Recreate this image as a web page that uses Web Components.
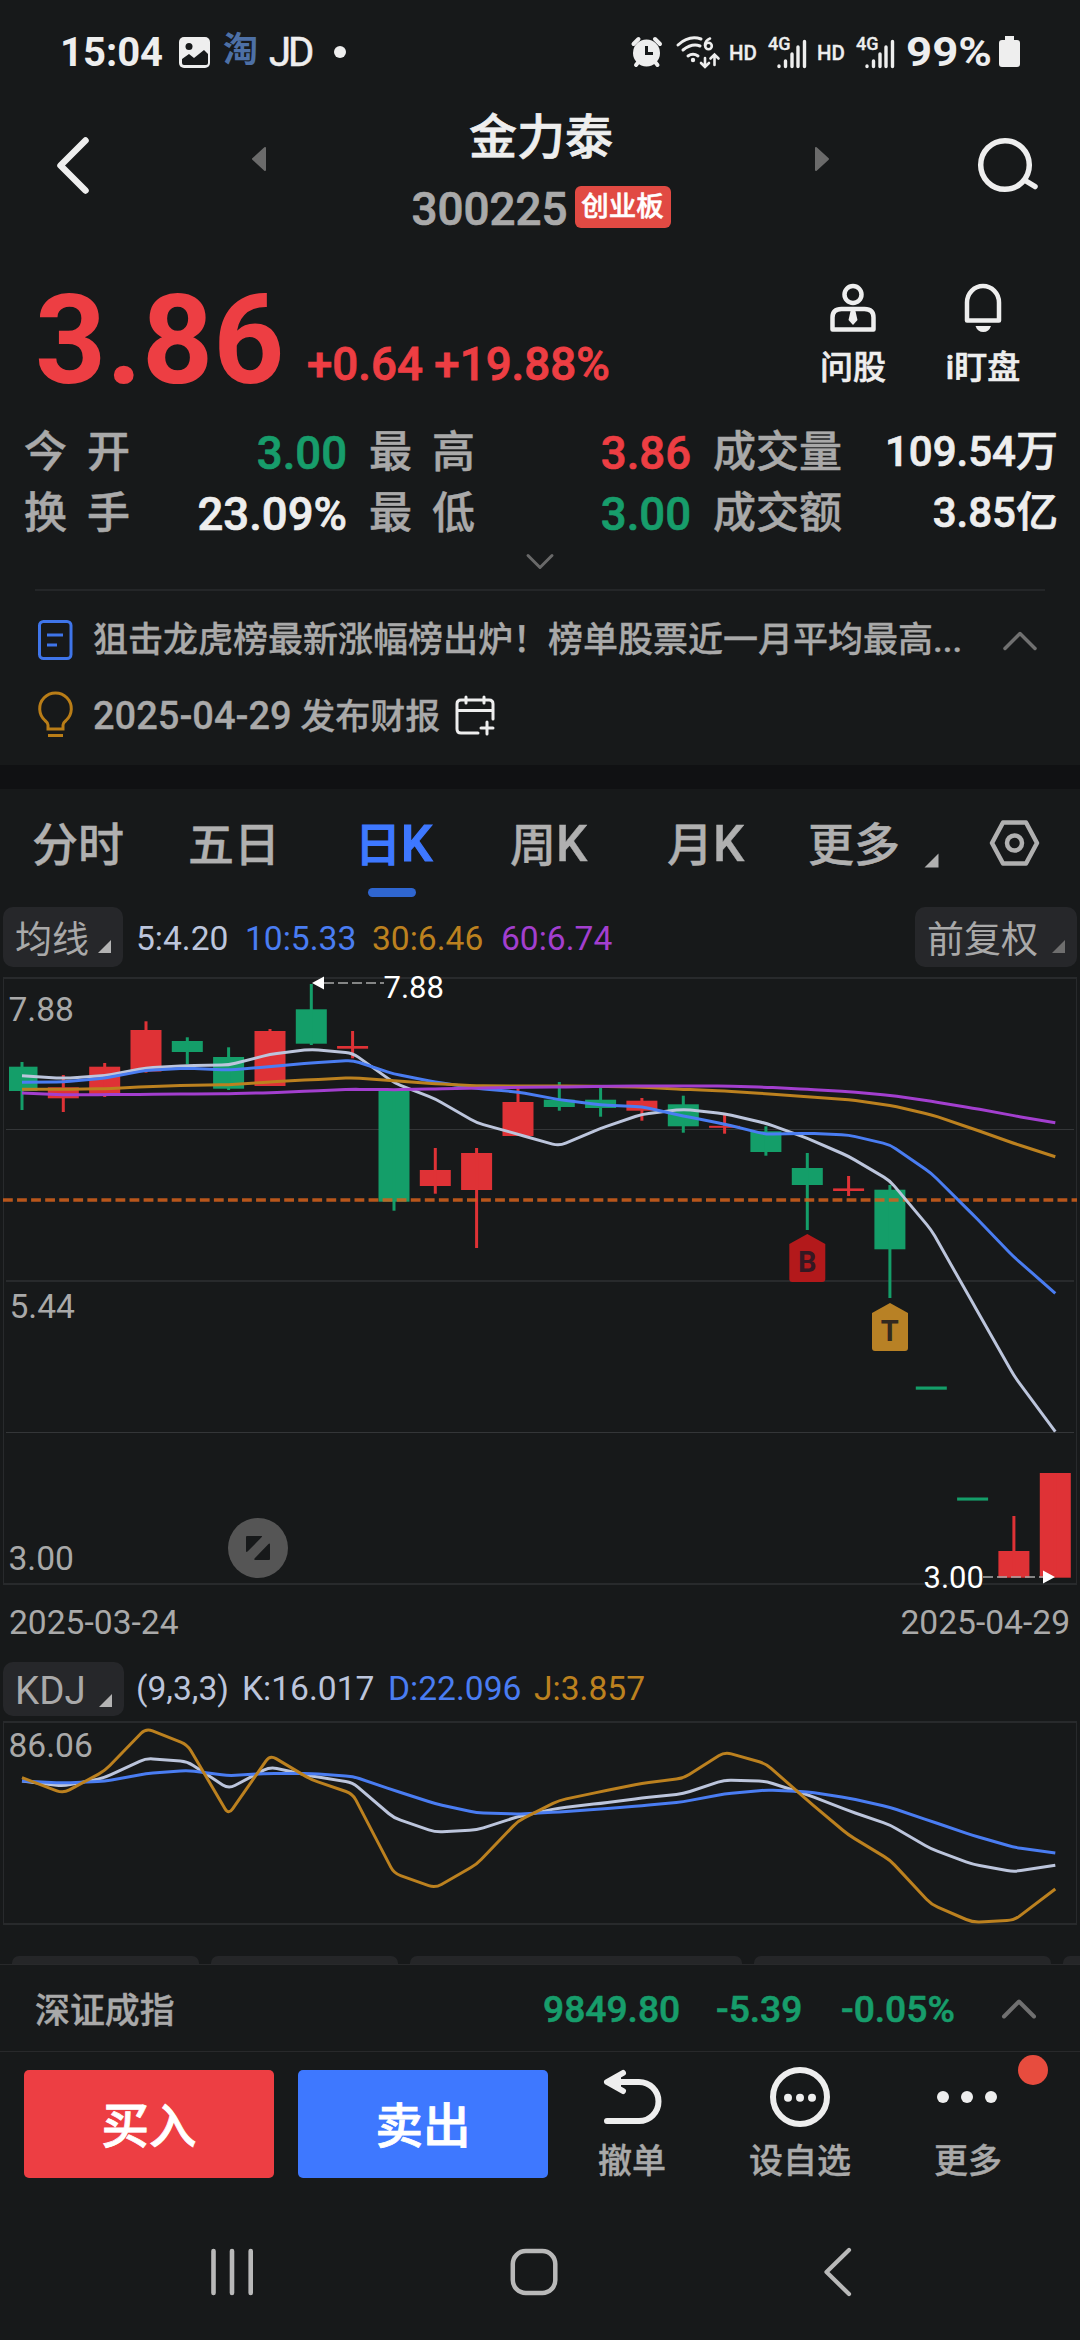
<!DOCTYPE html>
<html lang="zh-CN">
<head>
<meta charset="utf-8">
<title>金力泰 300225</title>
<style>
html,body{margin:0;padding:0;background:#17191a}
body{width:1080px;height:2340px;overflow:hidden;font-family:Roboto,"Noto Sans CJK SC",sans-serif;color:#eee;
--up:#ed3e43;--down:#179d6b;--mut:#a9a9a9;--blue:#3e78ff}
</style>
</head>
<body>
<stock-app></stock-app>
<script>
const define=(name,css,html)=>customElements.define(name,class extends HTMLElement{
  constructor(){super();this.attachShadow({mode:'open'}).innerHTML=
    `<style>*{box-sizing:border-box}svg{display:block;flex:none}:host{display:flex;box-sizing:border-box;white-space:nowrap}${css}</style>`+
    (typeof html==='function'?html(this):html);}
});

define('status-bar',`
:host{height:104px;align-items:center}
.time{width:119px;margin-left:60px;font-size:40px;font-weight:700}
.tao{width:46px;margin-left:12px;font-size:35px;line-height:50px;margin-top:-3px;font-weight:700;color:#4d70a6}
.jd{width:56px;font-size:40px;letter-spacing:-3px;-webkit-text-stroke:.6px #eee}
.sig{display:flex;width:52px;align-items:center;flex:none}
.pct{width:92px;margin-left:1px;font-size:40px;font-weight:700;transform:scaleX(1.14);transform-origin:0 50%}
.hd{width:36px;flex:none;font-size:20.500px;font-weight:500;padding-top:1px;-webkit-text-stroke:.3px}
.g{width:19px;flex:none;font-size:18px;font-weight:500;margin:-18px -14px 0 3px;-webkit-text-stroke:.3px}
`,`
<span class="time">15:04</span>
<svg width="32" height="104" viewBox="180 0 32 104"><rect x="180" y="37" width="31" height="31" rx="5" fill="#eee"/><circle cx="190" cy="46.500" r="3.500" fill="#17191a"/><path d="M183 59l7-5 5 4 10-8 4 4v9q0 2-2 2h-22q-2 0-2-2z" fill="#17191a"/></svg>
<span class="tao">淘</span><span class="jd">JD</span>
<svg width="300" height="104" viewBox="325 0 300 104"><circle cx="340" cy="52" r="6" fill="#eee"/></svg>
<svg width="48" height="104" viewBox="625 0 48 104"><circle cx="646.500" cy="53" r="13.500" fill="#eee"/><path d="M633.500 44l5-5M660 44l-5-5M636 65l4-5M657.500 65l-4-5" stroke="#eee" stroke-width="4" stroke-linecap="round"/><path d="M646.500 46v7.500h6.500" fill="none" stroke="#17191a" stroke-width="3"/></svg>
<svg width="56" height="104" viewBox="673 0 56 104" fill="none" stroke="#eee" stroke-width="3" stroke-linecap="round"><path d="M678 45q11-10 23-6M683 50q9-7 17-4M688 56q5-3.500 10 0"/><circle cx="693" cy="60" r="2.200" fill="#eee" stroke="none"/><path d="M705 58v8M701 63l4 4 4-4M714.500 65v-9M710.500 58.500l4-4 4 4" stroke-width="2.600"/><path d="M710 38.500q-5 2-5 7" stroke-width="2.600"/><circle cx="708.500" cy="46" r="3.300" stroke-width="2.600"/></svg>
<span class="hd">HD</span>
<span class="sig"><span class="g">4G</span><svg width="50" height="104" viewBox="773 0 50 104" stroke="#eee" stroke-width="3.400" stroke-linecap="round"><path d="M779 66v.500M785.500 61v5.500M792 54v12.500M798 47v19.500M804.500 41.500v25"/></svg></span>
<span class="hd">HD</span>
<span class="sig"><span class="g">4G</span><svg width="50" height="104" viewBox="773 0 50 104" stroke="#eee" stroke-width="3.400" stroke-linecap="round"><path d="M779 66v.500M785.500 61v5.500M792 54v12.500M798 47v19.500M804.500 41.500v25"/></svg></span>
<span class="pct">99%</span>
<svg width="24" height="104" viewBox="998 0 24 104"><path d="M1005 36h9v4h3q3 0 3 3v21q0 3-3 3h-15q-3 0-3-3V43q0-3 3-3h3z" fill="#eee"/></svg>
`);

define('stock-header',`
:host{height:156px}
.mid{width:282px;display:flex;flex-direction:column;align-items:center;-webkit-text-stroke:.7px}
.name{font-size:48px;line-height:64px;font-weight:500;padding-top:2px}
.row{display:flex;align-items:center;height:42px;margin-top:16px}
.code{font-size:45.800px;font-weight:500;color:var(--mut);padding-top:5px}
.tag{width:96px;height:42px;line-height:41px;margin-left:7px;border-radius:6px;background:#e14a43;color:#fff;font-size:27.500px;font-weight:500;text-align:center;-webkit-text-stroke:.5px}
`,`
<svg width="160" height="156" viewBox="0 104 160 156"><path d="M85.500 140.500L60.500 165.500 85.500 190.500" fill="none" stroke="#eee" stroke-width="6.500" stroke-linecap="round" stroke-linejoin="round"/></svg>
<svg width="240" height="156" viewBox="160 104 240 156"><path d="M265 148v22l-12-11z" fill="#6b6b6b" stroke="#6b6b6b" stroke-width="2" stroke-linejoin="round"/></svg>
<div class="mid"><div class="name">金力泰</div><div class="row"><span class="code">300225</span><span class="tag">创业板</span></div></div>
<svg width="240" height="156" viewBox="682 104 240 156"><path d="M816 148v22l12-11z" fill="#6b6b6b" stroke="#6b6b6b" stroke-width="2" stroke-linejoin="round"/></svg>
<svg width="158" height="156" viewBox="922 104 158 156" fill="none" stroke="#eee" stroke-width="5.500" stroke-linecap="round"><circle cx="1005" cy="165" r="24.300"/><path d="M1026 181l9 5.500"/></svg>
`);

define('price-panel',`
:host{height:160px}
.last{width:284px;padding-left:35px;font-size:124px;line-height:162px;font-weight:700;color:var(--up)}
.chg{width:491px;padding:60px 0 0 23px;font-size:45.700px;line-height:89px;font-weight:500;color:var(--up);-webkit-text-stroke:.8px}
.act{width:130px;display:flex;flex-direction:column;align-items:center;padding-top:20px;font-size:33px;font-weight:500;-webkit-text-stroke:.6px}
.act span{line-height:40px;margin-top:12px}
svg{-webkit-text-stroke:0}
`,`
<span class="last">3.86</span><span class="chg">+0.64 +19.88%</span>
<div class="act" style="margin-left:13px"><svg width="52" height="56" viewBox="827 280 52 56" fill="none" stroke="#eee" stroke-width="4.500" stroke-linejoin="round"><circle cx="853" cy="294.500" r="8.500"/><path d="M832.500 329.500v-12q0-8.500 9-8.500h23q9 0 9 8.500v12z"/><path d="M851 309h4l2.500 11-4.500 5-4.500-5z" fill="#eee" stroke="none"/></svg><span>问股</span></div>
<div class="act"><svg width="52" height="56" viewBox="958 280 52 56"><path d="M968 320.500v-18a16 16.500 0 0 1 32 0v18z" fill="none" stroke="#eee" stroke-width="4.500" stroke-linejoin="round"/><path d="M976.500 326h15.500q-2 6-7.700 6t-7.800-6z" fill="#eee"/></svg><span>i盯盘</span></div>
`);

define('quote-cell',`
:host{align-items:center;justify-content:space-between;height:61px;font-size:45.500px;font-weight:500;line-height:61px;-webkit-text-stroke:.7px}
.l{color:var(--mut);font-size:43px;margin-top:2px;-webkit-text-stroke:.5px}
.v{margin-top:3px}
:host([wide]) .l{letter-spacing:20px}
:host([big]) .v{font-size:42px;margin-top:0}
:host([t=up]) .v{color:var(--up)}:host([t=down]) .v{color:var(--down)}
`,`<span class="l"><slot name="label"></slot></span><span class="v"><slot></slot></span>`);

define('quote-grid',`
:host{display:block;height:170px}
b{font-weight:500}
.g{display:grid;grid-template-columns:323px 322px 345px;column-gap:22px;padding:1px 0 0 24px}
.c{display:flex;justify-content:center;margin-top:9px}
hr{border:0;height:2px;background:#242628;margin:17px 35px 0}
`,`<div class="g">
<quote-cell wide t="down"><b slot="label">今开</b>3.00</quote-cell>
<quote-cell wide t="up"><b slot="label">最高</b>3.86</quote-cell>
<quote-cell big><b slot="label">成交量</b>109.54万</quote-cell>
<quote-cell wide><b slot="label">换手</b>23.09%</quote-cell>
<quote-cell wide t="down"><b slot="label">最低</b>3.00</quote-cell>
<quote-cell big><b slot="label">成交额</b>3.85亿</quote-cell></div>
<div class="c"><svg width="32" height="20" viewBox="524 552 32 20"><path d="M528 555.500l12 12 12-12" fill="none" stroke="#696969" stroke-width="3" stroke-linecap="round" stroke-linejoin="round"/></svg></div><hr>`);

define('news-list',`
:host{display:block;height:175px;padding-top:13px;color:var(--mut);font-size:35px;font-weight:500}
.r{display:flex;align-items:center;height:74px}
.t,.d{line-height:50px;margin-top:1px;-webkit-text-stroke:.3px}
.t{width:895px;margin-left:-1px}.d{width:359px;margin-left:-1px}
.d i{font-style:normal;font-size:38px}
`,`
<div class="r"><svg width="94" height="50" viewBox="0 615 94 50" fill="none" stroke="#3f75ea" stroke-width="3"><rect x="39.500" y="621.500" width="31.500" height="37" rx="4"/><path d="M47 635h16M47 645h10"/></svg><span class="t">狙击龙虎榜最新涨幅榜出炉！榜单股票近一月平均最高...</span>
<svg width="60" height="30" viewBox="987 622 60 30"><path d="M1004 645.500l15-15 15 15" fill="none" stroke="#707070" stroke-width="3.500" stroke-linecap="round" stroke-linejoin="round"/></svg></div>
<div class="r" style="height:78px"><svg width="94" height="50" viewBox="0 690 94 50" fill="none" stroke="#b97d17" stroke-width="3"><path d="M48 728v-4q0-2-3-4.500a15.800 15.800 0 1 1 21 0q-3 2.500-3 4.500v4zM48 734.500h15"/></svg><span class="d"><i>2025-04-29</i> 发布财报</span>
<svg width="48" height="50" viewBox="452 690 48 50" fill="none" stroke="#eee" stroke-width="3" stroke-linecap="round"><path d="M478 732h-17q-4 0-4-4v-25q0-4 4-4h28q4 0 4 4v15M457 709.500h36M466 696v6M484 696v6M487 721v12M481 727h12"/></svg></div>`);

define('period-tabs',`
:host{height:116px;color:#b0b0b0;padding-left:32px;font-size:46px;font-weight:500}
span{line-height:86px;padding-top:13px;flex:none;-webkit-text-stroke:.4px}
i{font-style:normal;font-size:49.500px;line-height:1}
.on{color:var(--blue);-webkit-text-stroke:1.200px}
.on::after{content:"";display:block;width:48px;height:9px;border-radius:4.500px;background:#2f66d0;margin-left:13px}
`,`
<span style="width:156px">分时</span><span style="width:167px">五日</span><span class="on" style="width:155px">日<i>K</i></span><span style="width:157px">周<i>K</i></span><span style="width:141px">月<i>K</i></span><span style="width:112px">更多</span>
<svg width="60" height="116" viewBox="920 789 60 116"><path d="M938.500 853.500v14h-14z" fill="#b0b0b0"/></svg>
<svg width="70" height="116" viewBox="980 789 70 116" fill="none" stroke="#b0b0b0" stroke-width="4.500" stroke-linejoin="round"><path d="M1003 822.500h23l11 20.500-11 20.500h-23l-11-20.500z"/><circle cx="1014.500" cy="843" r="7.500"/></svg>`);

define('pill-button',`
:host{flex:none;align-items:center;justify-content:space-between;background:#26272a;border-radius:10px;color:var(--mut);font-size:37px;padding:0 12px 0 12px}
svg{margin-top:19px}
`,h=>`<span><slot></slot></span><svg width="13" height="13" viewBox="0 0 13 13"><path d="M13 0v13h-13z" fill="${h.getAttribute('tri')||'#b3b3b3'}"/></svg>`);

define('ma-legend',`
:host{height:62px;padding:1px 3px 0;font-size:33.600px;align-items:center}
span{flex:none;margin-top:3px}
`,`<pill-button style="width:120px;height:60px">均线</pill-button>
<span style="width:109px;margin-left:13px;color:#bcc5dc">5:4.20</span><span style="width:127px;color:#4a7df2">10:5.33</span><span style="width:129px;color:#bc811f">30:6.46</span><span style="width:414px;color:#a33fcf">60:6.74</span>
<pill-button style="width:162px;height:60px" tri="#6e6e6e">前复权</pill-button>`);

const X=i=>+(22+41.33*i).toFixed(1);
/* Polyline with softened corners */
function curve(ys){
  const p=ys.map((y,i)=>[X(i),y]);let d=`M${p[0]}`;
  for(let i=1;i<p.length-1;i++){
    const t=(a,b)=>{const l=Math.hypot(b[0]-a[0],b[1]-a[1]),k=Math.min(7/l,.5);return [(a[0]+(b[0]-a[0])*k).toFixed(1),(a[1]+(b[1]-a[1])*k).toFixed(1)];};
    d+=`L${t(p[i],p[i-1])}Q${p[i]} ${t(p[i],p[i+1])}`;
  }
  return d+`L${p[p.length-1]}`;
}
const line=(ys,c)=>`<path d="${curve(ys)}" fill="none" stroke="${c}" stroke-width="3"/>`;
const up='#df3236',dn='#149e69';
/* colour, body top, body bottom, wick top, wick bottom */
const candles=[[dn,1066.7,1091,1062,1110],[up,1087.3,1098.3,1075,1112],[up,1066.7,1094,1063,1097],[up,1030,1071.5,1021.3,1072.7],[dn,1041,1052,1037.3,1064.3],[dn,1057,1088.7,1047.3,1090],[up,1031,1086,1029,1086],[dn,1009.3,1043.7,984,1045],[up,1046,1048.7,1031,1058.3],[dn,1090,1201.7,1090,1210.7],[up,1170,1186,1148,1193.7],[up,1153,1190,1148,1248],[up,1102,1136,1088.3,1136],[dn,1099.7,1107,1082,1110.7],[dn,1099.7,1108,1088,1116.7],[up,1100.7,1110.7,1098,1120.7],[dn,1104.3,1126.3,1095.7,1132.7],[up,1125.8,1127.8,1115,1133.7],[dn,1131.3,1152,1126.3,1155.7],[dn,1168,1185,1153,1230],[up,1188.4,1191,1176,1196],[dn,1189.7,1249.3,1185,1298],[dn,1386.5,1389.7,0,0],[dn,1497.5,1500.6,0,0],[up,1551,1577.7,1516,1577],[up,1473,1577.7,1473,1577]];
const from=(b,a)=>a.map(v=>+(b+v/3).toFixed(1));
const ma5=from(960,[347,355,347,324,317,315,283,268,279,368,417,488,523,558,505,463,448,461,490,535,589,662,810,1028,1247,1415]);
const ma10=from(960,[367,366,354,331,325,330,320,309,301,342,366,385,396,419,435,440,468,492,523,520,525,554,640,763,891,1000]);
const ma30=from(960,[388,388,386,380,376,374,366,359,353,362,371,377,378,378,379,381,388,393,401,410,419,436,464,506,550,590]);
const ma60=from(960,[399,404,404,403,402,401,398,393,388,389,387,384,382,381,379,378,378,378,382,388,395,406,424,444,467,488]);

define('kline-chart',`:host{position:relative;height:640px}
text{font-family:Roboto,sans-serif}
.e{position:absolute;left:228px;top:551px;width:60px;height:60px;border-radius:50%;background:#555}`,()=>`
<svg width="1080" height="640" viewBox="0 967 1080 640">
<g fill="none" stroke="#282a2c"><path d="M3 978H1077M3 1584H1077" stroke-width="2"/><path d="M3.500 978V1584M1076.500 978V1584"/><path d="M6 1281H1074" stroke-width="2"/><path d="M6 1129.500H1074M6 1432.500H1074" stroke="#343638"/></g>
${candles.map(([c,a,b,h,l],i)=>{const x=X(i),x0=i?x-15.5:9,w=i?31:28.5;return `<rect x="${x0}" y="${a}" width="${w}" height="${(b-a).toFixed(1)}" fill="${c}"/>`+(l?`<rect x="${x-1.5}" y="${h}" width="3" height="${(l-h).toFixed(1)}" fill="${c}"/>`:'')}).join('')}
<path d="M3 1200H1077" stroke="#d3611c" stroke-opacity=".86" stroke-width="3.400" stroke-dasharray="9.800 4.260"/>
${line(ma5,'#bcc5dc')}${line(ma10,'#4a7df2')}${line(ma30,'#bc811f')}${line(ma60,'#a33fcf')}
<path d="M324 983H384M983 1577H1043" stroke="#a9a9a9" stroke-width="1.600" stroke-dasharray="10 4"/>
<path d="M312 983l12-6.500v13zM1055 1577l-12-6.500v13z" fill="#fff"/>
<g font-size="31" fill="#fff"><text x="383.500" y="998">7.88</text><text x="923.500" y="1587.500">3.00</text></g>
<g font-size="33.600" fill="#a9a9a9"><text x="8.500" y="1021">7.88</text><text x="9.500" y="1318">5.44</text><text x="8.500" y="1570">3.00</text></g>
<path d="M807.300 1234l18 10v35q0 3-3 3h-30q-3 0-3-3v-35z" fill="#b3191b"/>
<path d="M890 1303l18 10v35q0 3-3 3h-30q-3 0-3-3v-35z" fill="#b88125"/>
<g font-size="29" font-weight="700" text-anchor="middle"><text x="807.300" y="1271.700" fill="#351822">B</text><text x="889.700" y="1340.700" fill="#33291f">T</text></g>
</svg><div class="e"><svg width="60" height="60" viewBox="228 1518 60 60"><path d="M246 1537q0-1 1-1h14.500q1 0 .3 1L247.500 1551.500q-1.500 1-1.500-.500zM270 1559q0 1-1 1h-13.500q-2 0-1-1.500L268.500 1544q1.500-1 1.500.500z" fill="#17191a"/></svg></div>`);

define('date-axis',`:host{height:54px;justify-content:space-between;padding:0 10px 0 9px;font-size:33.600px;line-height:32px;color:var(--mut)}`,`<span>2025-03-24</span><span>2025-04-29</span>`);

define('kdj-legend',`:host{height:56px;padding:1px 3px;font-size:33.600px}
span{flex:none;line-height:54px}
pill-button{width:121px;height:54px;font-size:38.500px;padding-left:12px;padding-top:3px}`,`<pill-button>KDJ</pill-button>
<span style="width:106px;margin-left:12px;color:#bcc5dc">(9,3,3)</span><span style="width:146px;color:#bcc5dc">K:16.017</span><span style="width:146px;color:#4a7df2">D:22.096</span><span style="color:#bc811f">J:3.857</span>`);

const J=[...from(1480,[893,940,872,745,794,1004,825,899,941,1180,1224,1153,1023]),...from(1640,[481,455,430,415,336,371,481,585,660,793,847,841,747])];
const K=[...from(1480,[903,918,893,835,845,926,861,888,908,1014,1056,1050,1010]),...from(1640,[504,490,474,461,420,424,464,512,555,627,673,695,676])];
const D=[...from(1480,[903,909,904,881,871,887,880,881,889,931,971,998,1002]),...from(1640,[516,507,497,485,462,450,455,474,502,544,586,622,639])];
define('kdj-chart',`:host{height:239px}`,()=>`<svg width="1080" height="239" viewBox="0 1717 1080 239">
<g fill="none" stroke="#282a2c"><path d="M3 1722H1077M3 1924H1077" stroke-width="2"/><path d="M3.500 1722V1924M1076.500 1722V1924"/></g>
<text x="8.500" y="1757" font-size="33.600" fill="#a9a9a9" font-family="Roboto,sans-serif">86.06</text>
${line(K,'#bcc5dc')}${line(D,'#4a7df2')}${line(J,'#bc811f')}</svg>`);

define('panel-peek',`:host{height:8px;gap:12px;padding-left:12px;overflow:hidden}i{flex:none;height:30px;border-radius:7px;background:#252628}`,
`<i style="width:187px"></i><i style="width:187px"></i><i style="width:332px"></i><i style="width:297px"></i><i style="width:60px"></i>`);

define('index-strip',`:host{height:88px;border-top:1px solid #28292b;border-bottom:1px solid #28292b;align-items:center;padding-left:35px;font-size:37.200px;font-weight:500;color:var(--down);-webkit-text-stroke:.6px}
span{flex:none;padding-top:2px}.n{color:var(--mut);font-size:34.900px;width:508px;padding:0;-webkit-text-stroke:.4px}svg{-webkit-text-stroke:0}`,`
<span class="n">深证成指</span><span style="width:173px">9849.80</span><span style="width:125px">-5.39</span><span style="width:146px">-0.05%</span>
<svg width="60" height="30" viewBox="987 1990 60 30"><path d="M1004 2013.500l15-15 15 15" fill="none" stroke="#707070" stroke-width="4" stroke-linecap="round" stroke-linejoin="round"/></svg>`);

define('trade-button',`:host{width:250px;height:108px;flex:none;border-radius:5px;align-items:center;justify-content:center;color:#fff;font-size:47.500px;font-weight:500;-webkit-text-stroke:.8px}
span{line-height:60px;margin-top:6px}`,`<span><slot></slot></span>`);

define('tool-item',`:host{flex-direction:column;align-items:center;width:168px;flex:none;font-size:34px;font-weight:500;color:var(--mut);position:relative}
span{line-height:40px;margin-top:10px;-webkit-text-stroke:.4px}`,`<slot name="icon"></slot><span><slot></slot></span>`);

define('trade-bar',`:host{height:154px;padding:18px 0 0 24px}
trade-button+trade-button{margin-left:24px}
.t{display:flex;margin-top:-5px}
.b{position:absolute;right:4px;top:-10px;width:30px;height:30px;border-radius:50%;background:#e74c3e}`,`
<trade-button style="background:#ed3e43">买入</trade-button><trade-button style="background:#3e78ff">卖出</trade-button>
<div class="t"><tool-item><svg slot="icon" width="70" height="66" viewBox="597 2065 70 66" fill="none" stroke="#eee" stroke-width="6" stroke-linecap="round" stroke-linejoin="round"><path d="M607 2121h32a19.500 19.500 0 0 0 0-39h-31M623 2073l-16 9 16 9"/><path d="M621 2076l-12 6 12 6z" fill="#eee" stroke="none"/></svg>撤单</tool-item>
<tool-item><svg slot="icon" width="70" height="66" viewBox="763 2065 70 66" fill="#eee"><circle cx="798" cy="2097" r="27" fill="none" stroke="#eee" stroke-width="6"/><circle cx="786" cy="2097.700" r="4"/><circle cx="798" cy="2097.700" r="4"/><circle cx="810" cy="2097.700" r="4"/></svg>设自选</tool-item>
<tool-item><svg slot="icon" width="70" height="66" viewBox="931 2065 70 66" fill="#eee"><circle cx="941" cy="2097" r="6"/><circle cx="965" cy="2097" r="6"/><circle cx="989" cy="2097" r="6"/></svg>更多<i slot="icon" class="b"></i></tool-item></div>`);

define('nav-bar',`:host{height:134px}`,`
<svg width="360" height="134" viewBox="0 2206 360 134" stroke="#b9b9b9" stroke-width="4.600" stroke-linecap="round"><path d="M213.500 2251v42M232 2251v42M250.700 2251v42"/></svg>
<svg width="360" height="134" viewBox="360 2206 360 134"><rect x="512.800" y="2251" width="42.500" height="42" rx="13" fill="none" stroke="#b9b9b9" stroke-width="4.500"/></svg>
<svg width="360" height="134" viewBox="720 2206 360 134"><path d="M849 2250l-22.500 22 22.500 22" fill="none" stroke="#b9b9b9" stroke-width="4.200" stroke-linecap="round" stroke-linejoin="round"/></svg>`);

define('stock-app',`:host{flex-direction:column;width:1080px;height:2340px;background:#17191a;overflow:hidden}
.band{height:24px;flex:none;background:#101113}
status-bar,stock-header,price-panel,quote-grid,news-list,period-tabs,ma-legend,kline-chart,date-axis,kdj-legend,kdj-chart,panel-peek,index-strip,trade-bar,nav-bar{flex:none}`,`
<status-bar></status-bar><stock-header></stock-header><price-panel></price-panel><quote-grid></quote-grid><news-list></news-list><div class="band"></div>
<period-tabs></period-tabs><ma-legend></ma-legend><kline-chart></kline-chart><date-axis></date-axis><kdj-legend></kdj-legend><kdj-chart></kdj-chart><panel-peek></panel-peek><index-strip></index-strip><trade-bar></trade-bar><nav-bar></nav-bar>`);
</script>
</body>
</html>
